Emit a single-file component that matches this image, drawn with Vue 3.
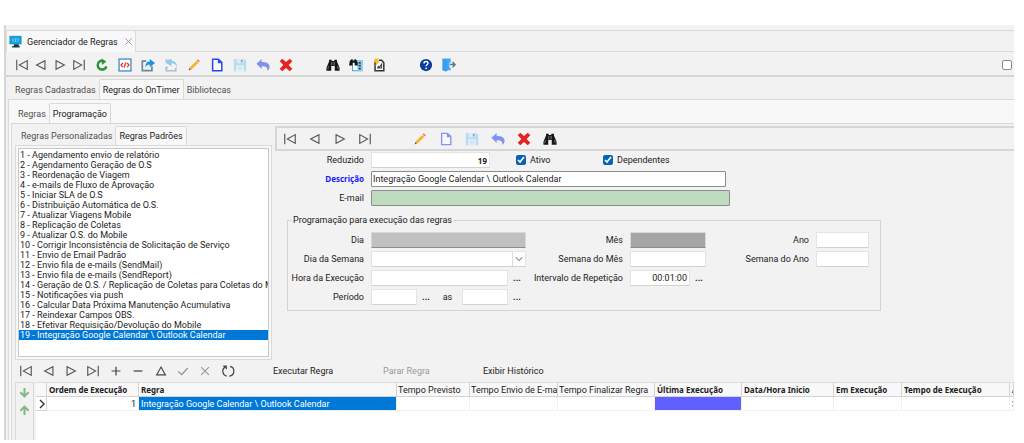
<script setup>
import { ref } from 'vue'

const mainNav = [['first', 'Primeiro'], ['prev', 'Anterior'], ['next', 'Próximo'], ['last', 'Último']]
const mainGroups = [
  [['refresh', 'Atualizar'], ['code', 'Código'], ['export', 'Exportar'], ['import', 'Importar'], ['pencil', 'Editar'],
    ['page', 'Novo'], ['save', 'Salvar'], ['undo', 'Desfazer'], ['delete', 'Excluir']],
  [['find', 'Localizar'], ['findlist', 'Localizar na lista'], ['report', 'Relatório']],
  [['help', 'Ajuda'], ['exit', 'Sair']],
]
const formActions = [['pencil', 'Editar'], ['softpage', 'Novo'], ['save', 'Salvar'], ['undo', 'Desfazer'], ['delete', 'Excluir'], ['find', 'Localizar']]
const gridNav = [...mainNav, ['plus', 'Incluir'], ['minus', 'Remover'], ['up', 'Editar'], ['check', 'Confirmar'], ['cross', 'Cancelar'], ['reload', 'Atualizar']]

const rules = [
  'Agendamento envio de relatório',
  'Agendamento Geração de O.S',
  'Reordenação de Viagem',
  'e-mails de Fluxo de Aprovação',
  'Iniciar SLA de O.S',
  'Distribuição Automática de O.S.',
  'Atualizar Viagens Mobile',
  'Replicação de Coletas',
  'Atualizar O.S. do Mobile',
  'Corrigir Inconsistência de Solicitação de Serviço',
  'Envio de Email Padrão',
  'Envio fila de e-mails (SendMail)',
  'Envio fila de e-mails (SendReport)',
  'Geração de O.S. / Replicação de Coletas para Coletas do M',
  'Notificações via push',
  'Calcular Data Próxima Manutenção Acumulativa',
  'Reindexar Campos OBS.',
  'Efetivar Requisição/Devolução do Mobile',
  'Integração Google Calendar \\ Outlook Calendar',
]
const selected = ref(18)
const reduced = ref('19')
const description = ref('Integração Google Calendar \\ Outlook Calendar')
const interval = ref('00:01:00')
const active = ref(true)
const dependents = ref(true)
</script>

<template>
  <svg class="defs" aria-hidden="true">
    <symbol id="first" viewBox="0 0 16 16"><path d="M2 2v12M14 3v10L5 8z" fill="none" stroke="#555" stroke-width="1.300" /></symbol>
    <symbol id="prev" viewBox="0 0 16 16"><path d="M12.500 3v10L3 8z" fill="none" stroke="#555" stroke-width="1.300" /></symbol>
    <symbol id="next" viewBox="0 0 16 16"><path d="M3.500 3v10L13 8z" fill="none" stroke="#555" stroke-width="1.300" /></symbol>
    <symbol id="last" viewBox="0 0 16 16"><path d="M14 2v12M2 3v10L11 8z" fill="none" stroke="#555" stroke-width="1.300" /></symbol>
    <symbol id="refresh" viewBox="0 0 16 16"><path d="M8.500 3.200A5 5 0 1 0 13 9.500" fill="none" stroke="#2e9238" stroke-width="2.800" /><path d="M7.500 .5l5.500 3.500L8 8z" fill="#2e9238" /></symbol>
    <symbol id="code" viewBox="0 0 16 16"><rect x="1.200" y="1.200" width="13.600" height="13.600" fill="#fff" stroke="#3b8fc8" stroke-width="1.500" /><path d="M5.500 5.500L3.500 8l2 2.500M10.500 5.500l2 2.500-2 2.500M9 5l-2 6" fill="none" stroke="#e23b30" stroke-width="1.600" /></symbol>
    <symbol id="export" viewBox="0 0 16 16"><path d="M6 3.500H1.500v11h11V9.500" fill="none" stroke="#6f8796" stroke-width="1.900" /><path d="M5 10.500c0-4.500 2-6.500 5-6.500V1l6 4.700-6 4.800V7.500C7.500 7.500 6.200 8.500 5 10.500z" fill="#1e90e0" /></symbol>
    <symbol id="import" viewBox="0 0 16 16"><path d="M4.500 11H2.500v3.500h11v-3M9 2.500H2.500V5" fill="none" stroke="#b4c0c8" stroke-width="1.800" /><path d="M14.500 12.500c0-5-2.500-6.500-6-6.500v3.500L1.500 5 8.500 1v2.500c5 0 7 3.500 6 9z" fill="#8ccbf2" /></symbol>
    <symbol id="pencil" viewBox="0 0 16 16"><path d="M2 14l1-3.200L10.500 3.300l2.300 2.300L5 13z" fill="#f6b32c" /><path d="M11 2.800l1.300-1.300 2.300 2.300-1.300 1.300z" fill="#e97863" /><path d="M2 14l.7-2.200 1.500 1.500z" fill="#5b4636" /></symbol>
    <symbol id="page" viewBox="0 0 16 16"><path d="M3 1.500h6.500L13.500 5v9.500H3z" fill="#fff" stroke="#2845f0" stroke-width="1.700" /><path d="M9 1.500V6h4.500z" fill="#2845f0" /></symbol>
    <symbol id="softpage" viewBox="0 0 16 16"><path d="M3 1.500h6.500L13.500 5v9.500H3z" fill="#f6f8ff" stroke="#8292ef" stroke-width="1.500" /><path d="M9 1.500V6h4.500z" fill="#8292ef" /></symbol>
    <symbol id="save" viewBox="0 0 16 16"><path d="M1 1h12l2 2v12H1z" fill="#b4dcf5" /><path d="M4 1h8v5H4z" fill="#dceaf2" /><path d="M9 2h1.800v3H9z" fill="#7ba3bf" /><path d="M3.500 8.500h9V15h-9z" fill="#e8f2f8" /><path d="M5 10.500h6M5 12.500h6" stroke="#c2d8e5" /></symbol>
    <symbol id="undo" viewBox="0 0 16 16"><path d="M.5 6.500L6.500 1v3.500c5 0 9 1.500 9 5.500 0 2-.7 3.500-2.500 4.500 .5-3.500-1.500-5-6.500-5v3z" fill="#8092ef" /></symbol>
    <symbol id="delete" viewBox="0 0 16 16"><path d="M3.700 .8L8 4.700l4.300-3.900 2.900 3L11 8l4.200 4.200-2.900 3L8 11.300l-4.300 3.900-2.900-3L5 8 .8 3.800z" fill="#e5231f" /></symbol>
    <symbol id="find" viewBox="0 0 16 16"><path d="M3.500 2h3v1.500h3V2h3v2l3 7v3.500H10V9H6v5.500H.5V11l3-7z" fill="#171717" /><path d="M6.700 4.500v4M9.300 4.500v4M2.800 9.500l-.8 3M13.200 9.500l.8 3" stroke="#a8a8a8" stroke-width=".8" /></symbol>
    <symbol id="findlist" viewBox="0 0 16 16"><rect x="4" y="3" width="11.500" height="11.500" fill="#fff" stroke="#4aa6de" stroke-width="1.200" /><path d="M9.500 2.500H16V15H9.500z" fill="#8fcdf1" /><path d="M1 3l2-1.500h1.200V3h2V1.500h1.600L10 5v3.500H6.500V5.500H4v3H0z" fill="#151515" /><path d="M11 4.500h2.500v2H11zM11 7.800h2.500v2H11zM11 11h2.500v2H11z" fill="#31444f" /></symbol>
    <symbol id="report" viewBox="0 0 16 16"><path d="M3.500 4.500V14.500h10V5.500L11 2.500H8" fill="#fff" stroke="#333" stroke-width="1.700" /><path d="M6 12l1.500-2.500 1 1.500L11 7v4.500H6" fill="none" stroke="#444" stroke-width="1.200" /><path d="M3 .5h4.500L7 3l2 .5L4 9.500l1-4.500H2z" fill="#f7b928" /></symbol>
    <symbol id="help" viewBox="0 0 16 16"><circle cx="8" cy="8" r="7" fill="#0d3d9c" /><path d="M5.700 6.200C5.700 3.300 10.300 3.300 10.300 6c0 1.600-2.200 1.700-2.200 3.500" fill="none" stroke="#fff" stroke-width="1.600" /><circle cx="8.100" cy="11.800" r="1" fill="#fff" /></symbol>
    <symbol id="exit" viewBox="0 0 16 16"><path d="M.5 .5H10v4.500H8.500v6H10V14H7l-3 1.500L.5 14z" fill="#43a8f5" /><path d="M.5 .5l5.500 2v13L.5 14z" fill="#2e8fe8" opacity=".4" /><path d="M9 7.500h5M12 4.500l3 3-3 3" fill="none" stroke="#5d7888" stroke-width="1.700" /></symbol>
    <symbol id="plus" viewBox="0 0 16 16"><path d="M8 3v10M3 8h10" stroke="#444" stroke-width="1.400" /></symbol>
    <symbol id="minus" viewBox="0 0 16 16"><path d="M3 8h10" stroke="#444" stroke-width="1.400" /></symbol>
    <symbol id="up" viewBox="0 0 16 16"><path d="M8 3.500l5 9H3z" fill="none" stroke="#444" stroke-width="1.300" /></symbol>
    <symbol id="check" viewBox="0 0 16 16"><path d="M2.500 8.500l4 3.500 7-7.500" fill="none" stroke="#999" stroke-width="1.500" /></symbol>
    <symbol id="cross" viewBox="0 0 16 16"><path d="M3.500 3.500l9 9M12.500 3.500l-9 9" stroke="#999" stroke-width="1.400" /></symbol>
    <symbol id="reload" viewBox="0 0 16 16"><path d="M5.200 3.300A5.600 5.600 0 0 0 6.500 13.800M10.500 2.800a5.600 5.600 0 0 1-1 11M2.500 2.500H6V6" fill="none" stroke="#444" stroke-width="1.400" /></symbol>
    <symbol id="monitor" viewBox="0 0 16 16"><path d="M.5 1h15v10.500H.5z" fill="#169ed8" /><path d="M6 4L4 6.200l2 2.200M10 4l2 2.200-2 2.200M8.500 4l-1 4.500" fill="none" stroke="#9ce2ff" /><path d="M6 11.500h6V14H6zM4 13.500h9v2H4z" fill="#1a3645" /></symbol>
    <symbol id="arrow" viewBox="0 0 16 16"><path d="M8 1.500v12M2 7.500l6 6 6-6" fill="none" stroke="#83b987" stroke-width="3" /></symbol>
    <symbol id="chevron" viewBox="0 0 16 16"><path d="M3 5.500l5 5 5-5" fill="none" stroke="#888" stroke-width="1.700" /></symbol>
  </svg>

  <main class="window">
    <header class="doc-tabs">
      <div class="doc-tab">
        <svg class="icon"><use href="#monitor" /></svg>
        <span>Gerenciador de Regras</span>
        <button class="close" aria-label="Fechar"><svg><use href="#cross" /></svg></button>
      </div>
    </header>

    <div class="toolbar" role="toolbar" aria-label="Principal">
      <div class="group nav">
        <button v-for="[id, name] in mainNav" :key="id" :aria-label="name"><svg class="icon"><use :href="'#' + id" /></svg></button>
      </div>
      <div v-for="(group, i) in mainGroups" :key="i" class="group">
        <button v-for="[id, name] in group" :key="id" :aria-label="name"><svg class="icon"><use :href="'#' + id" /></svg></button>
      </div>
      <input class="box" type="checkbox" aria-label="Opção">
    </div>

    <nav class="tabs level1">
      <button>Regras Cadastradas</button>
      <button class="on">Regras do OnTimer</button>
      <button>Bibliotecas</button>
    </nav>

    <section class="page1">
      <nav class="tabs level2">
        <button>Regras</button>
        <button class="on">Programação</button>
      </nav>

      <section class="page2">
        <div class="upper">
          <div class="side">
            <nav class="tabs level3">
              <button>Regras Personalizadas</button>
              <button class="on">Regras Padrões</button>
            </nav>
            <div class="list-frame">
              <ul class="list">
                <li v-for="(rule, i) in rules" :key="i">
                  <button :class="{ chosen: selected === i }" @click="selected = i">{{ i + 1 }} - {{ rule }}</button>
                </li>
              </ul>
            </div>
          </div>

          <div class="detail">
            <div class="toolbar form-bar" role="toolbar" aria-label="Regra">
              <div class="group nav">
                <button v-for="[id, name] in mainNav" :key="id" :aria-label="name"><svg class="icon"><use :href="'#' + id" /></svg></button>
              </div>
              <div class="group">
                <button v-for="[id, name] in formActions" :key="id" :aria-label="name"><svg class="icon"><use :href="'#' + id" /></svg></button>
              </div>
            </div>

            <form class="form" @submit.prevent>
              <div class="line">
                <label for="reduced">Reduzido</label>
                <input id="reduced" v-model="reduced" class="field code-field">
                <label class="tick tick-active"><input v-model="active" type="checkbox">Ativo</label>
                <label class="tick"><input v-model="dependents" type="checkbox">Dependentes</label>
              </div>
              <div class="line">
                <label for="description" class="required">Descrição</label>
                <input id="description" v-model="description" class="field framed description">
              </div>
              <div class="line">
                <label for="email">E-mail</label>
                <input id="email" class="field framed email">
              </div>

              <fieldset>
                <legend>Programação para execução das regras</legend>
                <div class="schedule">
                  <label for="day">Dia</label>
                  <input id="day" class="field locked day" disabled>
                  <label for="month">Mês</label>
                  <input id="month" class="field locked month" disabled>
                  <label for="year">Ano</label>
                  <input id="year" class="field">

                  <label for="weekday">Dia da Semana</label>
                  <div class="select">
                    <select id="weekday" class="field"><option></option></select>
                    <svg><use href="#chevron" /></svg>
                  </div>
                  <label for="month-week">Semana do Mês</label>
                  <input id="month-week" class="field">
                  <label for="year-week">Semana do Ano</label>
                  <input id="year-week" class="field">

                  <label for="time">Hora da Execução</label>
                  <div class="combo">
                    <input id="time" class="field time"><button class="more" aria-label="Escolher hora">...</button>
                  </div>
                  <label for="interval">Intervalo de Repetição</label>
                  <div class="combo">
                    <input id="interval" v-model="interval" class="field interval"><button class="more" aria-label="Escolher intervalo">...</button>
                  </div>

                  <label for="from" class="row-start">Período</label>
                  <div class="combo">
                    <input id="from" class="field period"><button class="more" aria-label="Escolher início">...</button>
                    <label for="to" class="to">as</label>
                    <input id="to" class="field period"><button class="more" aria-label="Escolher fim">...</button>
                  </div>
                </div>
              </fieldset>
            </form>
          </div>
        </div>

        <div class="grid-bar">
          <div class="grid-nav">
            <button v-for="[id, name] in gridNav" :key="id" :aria-label="name"><svg class="icon"><use :href="'#' + id" /></svg></button>
          </div>
          <div class="commands">
            <button>Executar Regra</button>
            <button disabled>Parar Regra</button>
            <button>Exibir Histórico</button>
          </div>
        </div>

        <div class="grid-area">
          <div class="movers">
            <button aria-label="Mover para baixo"><svg><use href="#arrow" /></svg></button>
            <button aria-label="Mover para cima"><svg class="flip"><use href="#arrow" /></svg></button>
          </div>
          <div class="table-box">
            <table>
              <colgroup>
                <col class="c-mark"><col class="c-order"><col class="c-rule"><col class="c-plan"><col class="c-mail"><col class="c-end">
                <col class="c-last"><col class="c-start"><col class="c-run"><col class="c-time"><col>
              </colgroup>
              <thead>
                <tr>
                  <th></th>
                  <th>Ordem de Execução</th>
                  <th>Regra</th>
                  <th class="plain">Tempo Previsto</th>
                  <th class="plain">Tempo Envio de E-ma</th>
                  <th class="plain">Tempo Finalizar Regra</th>
                  <th>Última Execução</th>
                  <th>Data/Hora Inicio</th>
                  <th>Em Execução</th>
                  <th>Tempo de Execução</th>
                  <th>A</th>
                </tr>
              </thead>
              <tbody>
                <tr>
                  <td class="mark"><svg viewBox="0 0 8 10"><path d="M2 1l4 4-4 4" fill="none" stroke="#333" stroke-width="1.400" /></svg></td>
                  <td class="num">1</td>
                  <td class="current">Integração Google Calendar \ Outlook Calendar</td>
                  <td></td><td></td><td></td>
                  <td class="late"></td>
                  <td></td><td></td><td></td>
                  <td>S</td>
                </tr>
              </tbody>
            </table>
          </div>
        </div>
      </section>
    </section>
  </main>
</template>

<style>
body {
  margin: 0;
  background: #fff;
}
</style>

<style scoped>
* {
  box-sizing: border-box;
}
.defs {
  position: absolute;
  width: 0;
  height: 0;
}
.window {
  display: flex;
  flex-direction: column;
  min-height: calc(100vh - 28px);
  margin: 25px 10px 3px 4px;
  padding-top: 5px;
  border-left: 2px solid #d6d6d6;
  background: #f2f2f2;
  color: #1c1c1c;
  font: 9px/10px Roboto, "Noto Sans", sans-serif;
}
button,
input,
select {
  margin: 0;
  padding: 0;
  border: 0;
  background: none;
  color: inherit;
  font: inherit;
}
button {
  display: flex;
  align-items: center;
  justify-content: center;
  white-space: nowrap;
}
.icon {
  width: 14px;
  height: 14px;
  flex: none;
}
.doc-tabs {
  height: 22px;
  border-top: 1px solid #d8d8d8;
  border-bottom: 1px solid #dadada;
}
.doc-tab {
  display: flex;
  align-items: center;
  width: 130px;
  height: 21px;
  padding-left: 2px;
  border: 1px solid #dadada;
  border-width: 0 1px 0 1px;
  background: #f8f8f8;
}
.doc-tab span {
  margin-left: 5px;
  flex: 1;
  white-space: nowrap;
}
.doc-tab .icon {
  width: 13px;
  height: 13px;
}
.close {
  width: 14px;
  height: 14px;
}
.close svg {
  width: 11px;
  height: 11px;
}
.toolbar {
  display: flex;
  align-items: center;
  height: 25px;
  padding: 2px 2px 0 6px;
  border-bottom: 2px solid #d6d6d6;
}
.group {
  display: flex;
  margin-right: 24px;
}
.group button {
  width: 23px;
  height: 18px;
}
.group.nav {
  margin-right: 2px;
}
.group.nav button {
  width: 19px;
}
.box {
  width: 10px;
  height: 10px;
  flex: none;
  appearance: none;
  border: 1px solid #8a8a8a;
  border-radius: 2px;
  background: #fff;
}
.toolbar > .box {
  margin-left: auto;
}
.tabs {
  display: flex;
  align-items: flex-end;
  padding-left: 6px;
}
.tabs button {
  height: 20px;
  padding: 0 2px;
  border: 1px solid transparent;
  border-bottom: 0;
  color: #505050;
}
.tabs .on {
  padding: 0 3px;
  border-color: #dadada;
  border-radius: 2px 2px 0 0;
  background: #f8f8f8;
  color: #1c1c1c;
}
.level1 {
  height: 22px;
}
.page1 {
  display: flex;
  flex: 1;
  flex-direction: column;
  margin-left: 2px;
  border-top: 1px solid #dadada;
  border-left: 1px solid #dadada;
  background: #f8f8f8;
}
.level2 {
  height: 23px;
}
.page2 {
  display: flex;
  flex: 1;
  flex-direction: column;
  margin-left: 2px;
  padding: 2px 0 0 3px;
  border-top: 1px solid #d6d6d6;
  border-left: 1px solid #dadada;
  background: #f2f2f2;
}
.upper {
  display: flex;
  gap: 3px;
}
.side {
  width: 257px;
  flex: none;
}
.level3 {
  padding-left: 3px;
}
.level3 button {
  height: 19px;
}
.list-frame {
  padding: 2px;
  border: 1px solid #dadada;
  background: #f8f8f8;
}
.list {
  height: 209px;
  margin: 0;
  padding: 1px 0 0;
  overflow: hidden;
  border: 1px solid #c8c8c8;
  background: #fff;
  list-style: none;
}
.list button {
  width: 100%;
  height: 10px;
  justify-content: flex-start;
  padding-left: 1px;
}
.list .chosen {
  background: #0078d7;
  color: #fff;
}
.detail {
  flex: 1;
  min-width: 0;
}
.form-bar {
  height: 25px;
  padding: 0;
  border: 2px solid #d6d6d6;
  border-right: 0;
}
.form-bar .group.nav {
  margin-right: 30px;
}
.form-bar .group.nav button {
  width: 25px;
}
.form-bar .group button {
  width: 26px;
}
.form {
  padding-left: 12px;
}
.line {
  display: flex;
  align-items: center;
  height: 19px;
}
.line:first-child {
  height: 18px;
}
.line > label:first-child {
  width: 84px;
  padding-right: 7px;
  text-align: right;
}
.field {
  display: block;
  width: 100%;
  height: 16px;
  padding: 0 2px;
  border: 1px solid #e4e4e4;
  border-bottom-color: #d2d2d2;
  border-radius: 1px;
  background: #fff;
}
.code-field {
  width: 119px;
  font-family: "Noto Sans", sans-serif;
  font-size: 8px;
  font-weight: 700;
  text-align: right;
}
.tick {
  display: flex;
  align-items: center;
  gap: 4px;
}
.tick input {
  width: 10px;
  height: 10px;
  accent-color: #0b62b5;
}
.tick-active {
  width: 87px;
  margin-left: 26px;
}
.line .required {
  color: #1a1aff;
  font-family: "Noto Sans", sans-serif;
  font-size: 8px;
  font-weight: 700;
}
.framed {
  border-color: #8c8c8c;
}
.description {
  width: 355px;
  padding: 0 1px;
}
.email {
  width: 359px;
  background: #c0dcc0;
}
fieldset {
  max-width: 594px;
  min-width: 0;
  height: 96px;
  margin: 8px 0 0;
  padding: 0;
  border: 1px solid #d4d4d4;
}
legend {
  height: 10px;
  margin-left: 4px;
  padding: 0 1px;
}
.schedule {
  display: grid;
  grid-template-columns: 83px 155px 104px 76px 110px 53px;
  grid-auto-rows: 19px;
  align-items: center;
  padding-top: 5px;
}
.schedule > label {
  padding-right: 7px;
  text-align: right;
}
.row-start {
  grid-column: 1;
}
.locked {
  border-color: #d8d8d8;
  border-bottom-color: #8c8c8c;
}
.day {
  background: #c0c0c0;
}
.month {
  background: #a6a6a6;
}
.select {
  position: relative;
}
.select select {
  appearance: none;
}
.select svg {
  position: absolute;
  top: 1px;
  right: 1px;
  width: 13px;
  height: 14px;
  padding: 1px;
  border-left: 1px solid #dcdcdc;
  pointer-events: none;
}
.combo {
  display: flex;
  align-items: center;
}
.combo .field {
  flex: none;
}
.time {
  width: 137px;
}
.interval {
  width: 60px;
  text-align: right;
}
.period {
  width: 46px;
}
.more {
  width: 16px;
  height: 14px;
  flex: none;
  padding-left: 2px;
  font-weight: 700;
}
.to {
  width: 29px;
  flex: none;
  text-align: center;
}
.grid-bar {
  display: flex;
  align-items: center;
  height: 22px;
}
.grid-nav {
  display: grid;
  grid-template-columns: repeat(10, 1fr);
  width: 224px;
}
.commands {
  display: grid;
  grid-template-columns: 110px 100px auto;
  justify-items: start;
  margin-left: 34px;
}
.commands button:disabled {
  color: #999;
}
.grid-area {
  display: flex;
  flex: 1;
  gap: 2px;
}
.movers {
  display: flex;
  flex-direction: column;
  width: 19px;
  border: 1px solid #dadada;
  border-bottom: 0;
}
.movers button {
  height: 18px;
}
.movers svg {
  width: 11px;
  height: 11px;
}
.flip {
  transform: rotate(180deg);
}
.table-box {
  flex: 1;
  min-width: 0;
  overflow: hidden;
  border-top: 1px solid #dcdcdc;
  background: #fff;
}
table {
  width: 100%;
  table-layout: fixed;
  border-collapse: separate;
  border-spacing: 0;
}
th,
td {
  height: 14px;
  padding: 0 0 0 2px;
  overflow: hidden;
  border-right: 1px solid #f0f0f0;
  border-bottom: 1px solid #f0f0f0;
  text-align: left;
  white-space: nowrap;
}
th {
  border-color: #d4d4d4;
  background: #f8f8f8;
  font-family: "Noto Sans", sans-serif;
  font-size: 8px;
}
.plain {
  padding-left: 1px;
  font-family: Roboto, "Noto Sans", sans-serif;
  font-size: 9px;
  font-weight: 400;
}
.c-mark { width: 11px; }
.c-order { width: 92px; }
.c-rule { width: 258px; }
.c-plan { width: 73px; }
.c-mail { width: 88px; }
.c-end { width: 97px; }
.c-last { width: 87px; }
.c-start { width: 92px; }
.c-run { width: 68px; }
.c-time { width: 108px; }
.mark {
  border-color: #d4d4d4;
}
.mark svg {
  display: block;
  width: 8px;
  height: 10px;
}
.num {
  padding-right: 2px;
  text-align: right;
}
.current {
  background: #0078d7;
  color: #fff;
}
.late {
  background: #6060ff;
}
</style>
